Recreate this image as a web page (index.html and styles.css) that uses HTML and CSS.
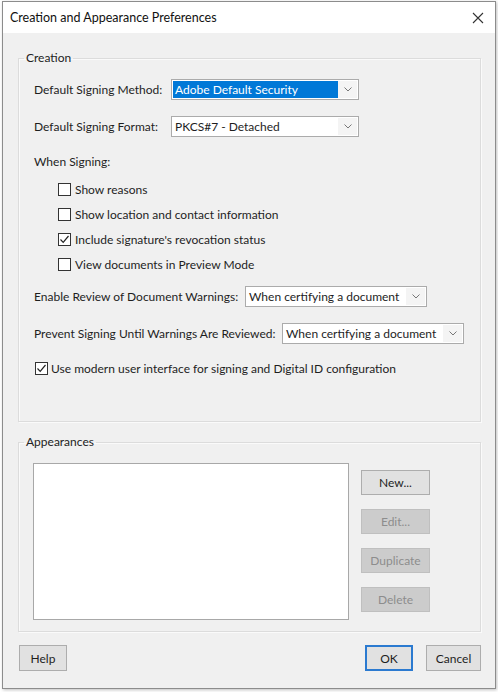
FILE: index.html
```html
<!DOCTYPE html>
<html>
<head>
<meta charset="utf-8">
<link rel="stylesheet" href="styles.css">
</head>
<body>
<div class="window">
  <div class="titlebar">
    <span class="title">Creation and Appearance Preferences</span>
    <svg class="close" width="12" height="12" viewBox="0 0 12 12"><path d="M1 1L11 11M11 1L1 11" stroke="#333" stroke-width="1.1" fill="none"/></svg>
  </div>
  <div class="content">
    <fieldset class="group creation">
      <legend>Creation</legend>
      <div class="row r1">
        <span class="label w-method">Default Signing Method:</span>
        <div class="select wide"><span class="value selected">Adobe Default Security</span><span class="arrow"><svg width="8" height="5" viewBox="0 0 8 5"><path d="M0.5 0.5L4 4L7.5 0.5" stroke="#777" fill="none"/></svg></span></div>
      </div>
      <div class="row r2">
        <span class="label w-method">Default Signing Format:</span>
        <div class="select wide"><span class="value">PKCS#7 - Detached</span><span class="arrow"><svg width="8" height="5" viewBox="0 0 8 5"><path d="M0.5 0.5L4 4L7.5 0.5" stroke="#777" fill="none"/></svg></span></div>
      </div>
      <div class="row r3"><span class="label">When Signing:</span></div>
      <div class="checks">
        <label class="check"><span class="box"></span>Show reasons</label>
        <label class="check"><span class="box"></span>Show location and contact information</label>
        <label class="check"><span class="box"><svg width="11" height="11" viewBox="0 0 11 11"><path d="M1.5 5.5L4.2 8.3L9.5 2" stroke="#222" stroke-width="1.2" fill="none"/></svg></span>Include signature's revocation status</label>
        <label class="check"><span class="box"></span>View documents in Preview Mode</label>
      </div>
      <div class="row r4">
        <span class="label w-enable">Enable Review of Document Warnings:</span>
        <div class="select narrow"><span class="value">When certifying a document</span><span class="arrow"><svg width="8" height="5" viewBox="0 0 8 5"><path d="M0.5 0.5L4 4L7.5 0.5" stroke="#777" fill="none"/></svg></span></div>
      </div>
      <div class="row r5">
        <span class="label w-prevent">Prevent Signing Until Warnings Are Reviewed:</span>
        <div class="select narrow"><span class="value">When certifying a document</span><span class="arrow"><svg width="8" height="5" viewBox="0 0 8 5"><path d="M0.5 0.5L4 4L7.5 0.5" stroke="#777" fill="none"/></svg></span></div>
      </div>
      <label class="check modern"><span class="box"><svg width="11" height="11" viewBox="0 0 11 11"><path d="M1.5 5.5L4.2 8.3L9.5 2" stroke="#222" stroke-width="1.2" fill="none"/></svg></span>Use modern user interface for signing and Digital ID configuration</label>
    </fieldset>
    <fieldset class="group appearances">
      <legend>Appearances</legend>
      <div class="app-body">
        <div class="listbox"></div>
        <div class="app-buttons">
          <div class="btn">New...</div>
          <div class="btn disabled">Edit...</div>
          <div class="btn disabled">Duplicate</div>
          <div class="btn disabled">Delete</div>
        </div>
      </div>
    </fieldset>
    <div class="footer">
      <div class="btn help">Help</div>
      <div class="spacer"></div>
      <div class="btn ok">OK</div>
      <div class="btn cancel">Cancel</div>
    </div>
  </div>
</div>
</body>
</html>
```
FILE: styles.css
```css
* { box-sizing: border-box; }
html, body { margin: 0; padding: 0; background: #ffffff; }
body {
  font-family: Lato, "Liberation Sans", sans-serif;
  font-size: 12px;
  color: #1e1e1e;
  width: 498px;
  height: 692px;
  overflow: hidden;
}
.window {
  margin: 1px 0 0 2px;
  width: 494px;
  height: 688px;
  border: 1px solid #8c8c8c;
  background: #f0f0f0;
  box-shadow: 1px 1px 3px rgba(0,0,0,0.25);
  display: flex;
  flex-direction: column;
}
.titlebar {
  height: 31px;
  background: #ffffff;
  display: flex;
  align-items: center;
  padding: 0 0 0 7px;
  flex: none;
}
.title {
  font-size: 12.5px;
  color: #111;
  flex: 1;
}
.close { margin-right: 11px; }
.content {
  padding: 17px 14px 0 15px;
  display: flex;
  flex-direction: column;
}
.group {
  margin: 0;
  border: 1px solid #dcdcdc;
  box-shadow: inset 1px 1px 0 #fafafa, 1px 1px 0 #fafafa;
  padding: 0;
  min-width: 0;
}
.group legend {
  padding: 0 2px;
  line-height: 16px;
  font-size: 12px;
  color: #222;
}
.creation legend { margin-left: -10px; }
.appearances legend { margin-left: -9px; }
.creation {
  height: 372px;
  padding: 0 0 0 15px;
}
.row {
  display: flex;
  align-items: center;
  height: 21px;
}
.r1 { margin-top: 13px; }
.r2 { margin-top: 16px; }
.r3 { margin-top: 14px; }
.r4 { margin-top: 9px; }
.r5 { margin-top: 16px; }
.label { white-space: nowrap; }
.w-method { width: 137px; }
.w-enable { width: 211px; }
.w-prevent { width: 248px; }
.select {
  height: 21px;
  background: #ffffff;
  border: 1px solid #ababab;
  display: flex;
  align-items: stretch;
  padding: 1px;
}
.select.wide { width: 188px; }
.select.narrow { width: 182px; }
.select .value {
  flex: 1;
  display: flex;
  align-items: center;
  padding-left: 2px;
  white-space: nowrap;
  overflow: hidden;
}
.select .value.selected {
  background: #0078d7;
  color: #ffffff;
}
.select .arrow {
  width: 19px;
  display: flex;
  align-items: center;
  justify-content: center;
  background: #f4f4f4;
}
.checks {
  margin-top: 5px;
  padding-left: 24px;
  display: flex;
  flex-direction: column;
}
.check {
  height: 25px;
  display: flex;
  align-items: center;
  white-space: nowrap;
}
.box {
  width: 13px;
  height: 13px;
  border: 1px solid #333;
  background: #ffffff;
  margin-right: 4px;
  display: flex;
  align-items: center;
  justify-content: center;
  flex: none;
}
.modern {
  margin-top: 14px;
  margin-left: 1px;
  height: 21px;
}
.modern .box { margin-right: 3px; }
.appearances {
  margin-top: 12px;
  height: 198px;
  padding: 0 0 0 14px;
}
.app-body {
  display: flex;
  margin-top: 13px;
}
.listbox {
  width: 316px;
  height: 157px;
  background: #ffffff;
  border: 1px solid #a8a8a8;
}
.app-buttons {
  margin-left: 12px;
  margin-top: 7px;
  display: flex;
  flex-direction: column;
  gap: 14px;
}
.btn {
  height: 25px;
  width: 69px;
  background: #e1e1e1;
  border: 1px solid #adadad;
  display: flex;
  align-items: center;
  justify-content: center;
  color: #1e1e1e;
}
.btn.disabled {
  background: #cccccc;
  border-color: #bfbfbf;
  color: #8d8d8d;
}
.footer {
  display: flex;
  margin-top: 13px;
  padding-left: 1px;
}
.footer .btn { height: 26px; }
.help { width: 48px; }
.spacer { flex: 1; }
.ok {
  width: 48px;
  border: 2px solid #2b7ad0;
  margin-right: 13px;
}
.cancel { width: 55px; margin-right: 0; }
```
